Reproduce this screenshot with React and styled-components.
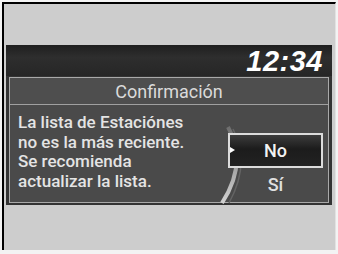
import React from 'react'
import styled, { createGlobalStyle } from 'styled-components'

const Global = createGlobalStyle`
  html, body {
    margin: 0;
    padding: 0;
    background: #f3f3f3;
  }
  body {
    font-family: Roboto, "Liberation Sans", Arial, sans-serif;
  }
`;

const Frame = styled.div`
  margin: 2px 0 0 2px;
  width: 334px;
  height: 248px;
  box-sizing: border-box;
  border-top: 2px solid #000;
  border-left: 2px solid #000;
  border-right: 1px solid #e2e2e2;
  background: #cdcdcd;
  padding: 41px 0 0 2px;
`;

const Screen = styled.div`
  width: 326px;
  height: 160px;
  background: #333;
  display: flex;
  flex-direction: column;
`;

const TopBar = styled.div`
  height: 31px;
  display: flex;
  align-items: center;
  justify-content: flex-end;
  padding-right: 9px;
  background: linear-gradient(#1f1f1f, #2e2e2e 40%, #262626);
`;

const Clock = styled.span`
  font-family: "Liberation Sans", Arial, sans-serif;
  color: #fff;
  font-size: 29px;
  font-weight: bold;
  font-style: italic;
  letter-spacing: 0.5px;
  line-height: 1;
  margin-top: 2px;
`;

const Dialog = styled.div`
  margin: 1px 3px 0;
  flex: 1;
  margin-bottom: 2px;
  border: 1.5px solid #a9a9a9;
  background: #4a4a4a;
  display: flex;
  flex-direction: column;
`;

const Title = styled.div`
  height: 26px;
  display: flex;
  align-items: center;
  justify-content: center;
  color: #dadada;
  font-size: 18px;
  border-bottom: 1.5px solid #a0a0a0;
  background: #4e4e4e;
`;

const Body = styled.div`
  flex: 1;
  position: relative;
  display: flex;
  padding: 8px 5px 0 8px;
`;

const Message = styled.p`
  margin: 0;
  flex: 1;
  color: #e4e4e4;
  font-size: 17px;
  font-weight: 500;
  line-height: 19.6px;
`;

const Arc = styled.svg`
  position: absolute;
  left: 196px;
  top: 20px;
`;

const Options = styled.div`
  width: 95px;
  position: relative;
  display: flex;
  flex-direction: column;
  align-items: center;
  padding-top: 20px;
`;

const Option = styled.div`
  width: 95px;
  height: ${p => (p.$selected ? '35px' : '32px')};
  box-sizing: border-box;
  display: flex;
  align-items: center;
  justify-content: center;
  font-size: 18px;
  font-weight: 500;
  position: relative;
  border: ${p => (p.$selected ? '2px solid #dcdcdc' : 'none')};
  background: ${p => (p.$selected ? 'linear-gradient(#3c3c3c, #1c1c1c 45%, #222)' : 'transparent')};
  color: ${p => (p.$selected ? '#f2f2f2' : '#e0e0e0')};
`;

const Pointer = styled.span`
  position: absolute;
  left: 0;
  top: 12px;
  width: 0;
  height: 0;
  border-top: 3px solid transparent;
  border-bottom: 3px solid transparent;
  border-left: 5px solid #fff;
`;

export default function App() {
  return (
    <>
      <Global />
      <Frame>
        <Screen>
          <TopBar>
            <Clock>12:34</Clock>
          </TopBar>
          <Dialog>
            <Title>Confirmación</Title>
            <Body>
              <Message>
                La lista de Estaciónes<br />
                no es la más reciente.<br />
                Se recomienda<br />
                actualizar la lista.
              </Message>
              <Arc width="40" height="80" viewBox="0 0 40 80">
                <defs>
                  <linearGradient id="arcg" x1="0" y1="0" x2="0" y2="1">
                    <stop offset="0" stopColor="#6e6e6e" />
                    <stop offset="0.5" stopColor="#a0a0a0" />
                    <stop offset="1" stopColor="#d2d2d2" />
                  </linearGradient>
                </defs>
                <path d="M22 2 Q42 38 16 78" fill="none" stroke="url(#arcg)" strokeWidth="4" />
                <path d="M27 4 Q45 38 23 78" fill="none" stroke="#646464" strokeWidth="1.5" />
              </Arc>
              <Options>
                <Option $selected>
                  <Pointer />
                  No
                </Option>
                <Option>Sí</Option>
              </Options>
            </Body>
          </Dialog>
        </Screen>
      </Frame>
    </>
  )
}
